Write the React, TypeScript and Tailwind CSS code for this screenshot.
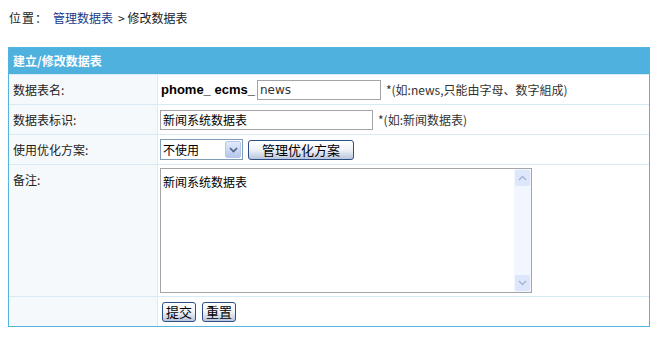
import React from "react";

const font = { fontFamily: '"Noto Sans CJK SC", "Liberation Sans", sans-serif' };

const XpButton = ({ children, className = "" }: { children: React.ReactNode; className?: string }) => (
  <button
    className={`h-[20px] rounded-[3px] border border-[#2c4f86] bg-gradient-to-b from-white via-[#eef1f7] to-[#b9c6dc] text-[13px] leading-none text-black ${className}`}
  >
    {children}
  </button>
);

const Row = ({
  label,
  children,
  tall = false,
}: {
  label: string;
  children: React.ReactNode;
  tall?: boolean;
}) => (
  <div className="grid grid-cols-[149px_1fr] border-t border-[#d6ebf6]">
    <div
      className={`bg-[#f6f9fb] border-r border-[#d6ebf6] pl-[4px] text-[12px] text-[#222] ${
        tall ? "pt-[6px]" : "flex items-center"
      }`}
    >
      {label}
    </div>
    <div className={`pl-[2px] ${tall ? "py-[3px]" : "flex h-[29px] items-center"}`}>{children}</div>
  </div>
);

const App = () => {
  return (
    <div className="h-[354px] w-[662px] bg-white text-[#222]" style={font}>
      {/* breadcrumb */}
      <div className="flex h-[36px] items-center pl-[9px] text-[12px]">
        <span className="tracking-[1px]">位置：</span>
        <a href="#" className="ml-[5px] text-[#163b8c]">管理数据表</a>
        <span className="ml-[5px]">&gt; 修改数据表</span>
      </div>

      <div className="ml-[8px] mt-[11px] w-[642px] border border-[#55b3df]">
        <div className="flex h-[26px] items-center bg-[#4fb1de] pl-[4px] text-[12px] font-bold text-white">
          建立/修改数据表
        </div>

        <Row label="数据表名:">
          <span
            className="ml-[1px] text-[13px] font-bold text-black"
            style={{ fontFamily: '"Liberation Sans", Arial, sans-serif' }}
          >
            phome_ ecms_
          </span>
          <input
            defaultValue="news"
            className="ml-[2px] h-[20px] w-[124px] border border-[#a5a5a5] px-[2px] text-[12px] text-[#333] outline-none"
            style={{ fontFamily: '"DejaVu Sans", Verdana, sans-serif' }}
          />
          <span className="ml-[5px] text-[12px] text-[#333]">*(如:news,只能由字母、数字組成)</span>
        </Row>

        <Row label="数据表标识:">
          <input
            defaultValue="新闻系统数据表"
            className="h-[20px] w-[213px] border border-[#a5a5a5] px-[2px] text-[12px] text-black outline-none"
          />
          <span className="ml-[5px] text-[12px] text-[#333]">*(如:新闻数据表)</span>
        </Row>

        <Row label="使用优化方案:">
          <div className="flex h-[21px] w-[83px] items-center border border-[#7f9db9] bg-white">
            <span className="flex-1 pl-[2px] text-[12px] text-black">不使用</span>
            <span className="mr-[1px] flex h-[17px] w-[16px] items-center justify-center rounded-[2px] border border-[#b7c7e5] bg-gradient-to-b from-[#e3ebfb] to-[#b5c7ec]">
              <svg width="9" height="6" viewBox="0 0 9 6">
                <path d="M1 1 L4.5 4.5 L8 1" stroke="#4d6185" strokeWidth="1.6" fill="none" />
              </svg>
            </span>
          </div>
          <XpButton className="ml-[5px] w-[106px] text-[12px]">管理优化方案</XpButton>
        </Row>

        <Row label="备注:" tall>
          <div className="flex h-[125px] w-[372px] border border-[#a5a5a5] bg-white">
            <div className="flex-1 px-[2px] pt-[4px] text-[12px] text-black">新闻系统数据表</div>
            <div className="flex w-[17px] flex-col justify-between bg-[#f2f6fe] p-[1px]">
              <span className="flex h-[16px] items-center justify-center rounded-[2px] bg-[#dde6fa]">
                <svg width="9" height="6" viewBox="0 0 9 6">
                  <path d="M1 5 L4.5 1.5 L8 5" stroke="#a4b4d6" strokeWidth="1.4" fill="none" />
                </svg>
              </span>
              <span className="flex h-[16px] items-center justify-center rounded-[2px] bg-[#dde6fa]">
                <svg width="9" height="6" viewBox="0 0 9 6">
                  <path d="M1 1 L4.5 4.5 L8 1" stroke="#a4b4d6" strokeWidth="1.4" fill="none" />
                </svg>
              </span>
            </div>
          </div>
        </Row>

        <Row label="">
          <XpButton className="ml-[2px] w-[34px]">提交</XpButton>
          <XpButton className="ml-[6px] w-[34px]">重置</XpButton>
        </Row>
      </div>
    </div>
  );
};

export default App;
